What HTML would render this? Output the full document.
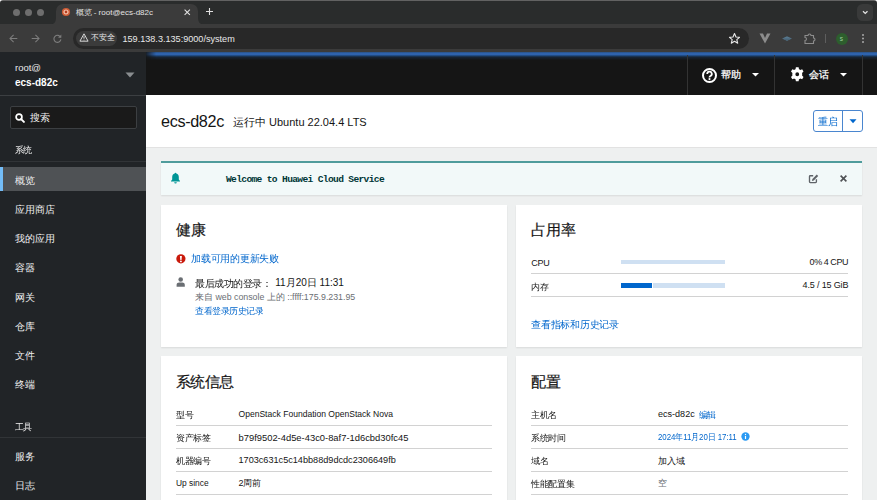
<!DOCTYPE html>
<html><head><meta charset="utf-8">
<style>
*{box-sizing:border-box;margin:0;padding:0}
html,body{width:877px;height:500px;overflow:hidden;background:#eef0f0;font-family:"Liberation Sans",sans-serif;}
.abs{position:absolute}
/* browser chrome */
#tabstrip{position:absolute;left:0;top:0;width:877px;height:25px;background:#2a2c2c;border-top:1px solid #626262}
#toolbar{position:absolute;left:0;top:24px;width:877px;height:28px;background:#3b3b3b}
.dot{position:absolute;width:7.5px;height:7.5px;border-radius:50%;background:#6e6e6e;top:8.5px}
#tab{position:absolute;left:56px;top:4px;width:142px;height:21px;background:#3b3b3b;border-radius:7px 7px 0 0}
#omni{position:absolute;left:73px;top:28px;width:676px;height:21px;background:#282828;border-radius:11px}
#chip{position:absolute;left:76px;top:31px;width:41px;height:14.5px;background:#3b3b3b;border-radius:8px}
.wt{color:#e3e3e3;font-size:9px;white-space:nowrap}
/* cockpit */
#sidebar{position:absolute;left:0;top:52px;width:146px;height:448px;background:#212427}
#masthead{position:absolute;left:146px;top:52px;width:731px;height:43px;background:#151515}
#blueline{position:absolute;left:146px;top:52px;width:731px;height:8px;background:linear-gradient(#2a4f7c 0,#2f63ad 1.2px,#2f63ad 2.5px,#1f4a80 3.6px,#172638 5px,#151515 8px);-webkit-mask-image:linear-gradient(90deg,rgba(0,0,0,0.15) 0,#000 10px)}
.sep{position:absolute;top:55px;width:1px;height:40px;background:#333}
#hdr{position:absolute;left:146px;top:95px;width:731px;height:53px;background:#fff;border-bottom:1px solid #e2e2e2}
.card{position:absolute;background:#fff;box-shadow:0 1px 1.5px rgba(3,3,3,0.09)}
.nav{position:absolute;left:15px;color:#f0f0f0;font-size:9.6px;white-space:nowrap}
.h2{position:absolute;font-size:14.5px;color:#151515;white-space:nowrap;-webkit-text-stroke:0.2px #151515}
.lbl{position:absolute;font-size:9.5px;color:#151515;white-space:nowrap}
.link{color:#0066cc}
.hr{position:absolute;height:1px;background:#d2d2d2}
</style></head><body>

<!-- tab strip -->
<div id="tabstrip"></div>
<div class="dot" style="left:12.5px"></div>
<div class="dot" style="left:24.5px"></div>
<div class="dot" style="left:36.5px"></div>
<svg class="abs" style="left:0;top:0" width="4" height="4" viewBox="0 0 4 4"><path d="M0 0H3Q0 0.3 0 3Z" fill="#f4f4f4"/></svg><svg class="abs" style="left:873px;top:0" width="4" height="4" viewBox="0 0 4 4"><path d="M4 0H1Q4 0.3 4 3Z" fill="#f4f4f4"/></svg><div id="tab"></div><svg class="abs" style="left:49px;top:18px" width="7" height="7" viewBox="0 0 7 7"><path d="M0 7Q7 7 7 0V7Z" fill="#3b3b3b"/></svg><svg class="abs" style="left:198px;top:18px" width="7" height="7" viewBox="0 0 7 7"><path d="M7 7Q0 7 0 0V7Z" fill="#3b3b3b"/></svg>
<div id="toolbar"></div>
<div id="omni"></div>
<div id="chip"></div>

<!-- tab contents -->
<svg class="abs" style="left:60.8px;top:7.2px" width="10" height="10" viewBox="0 0 10 10"><circle cx="5" cy="5" r="4.1" fill="#cf5c35"/><circle cx="5" cy="5" r="2" fill="none" stroke="#f2c2ad" stroke-width="1.2"/><circle cx="5" cy="5" r="0.9" fill="#a8321a"/></svg>
<div class="abs wt" style="left:75.5px;top:6.5px;font-size:8px;line-height:11px">概览 - root@ecs-d82c</div>
<svg class="abs" style="left:184px;top:9px" width="6.5" height="6.5" viewBox="0 0 6.5 6.5"><path d="M0.6 0.6L5.9 5.9M5.9 0.6L0.6 5.9" stroke="#e0e0e0" stroke-width="1.1"/></svg>
<svg class="abs" style="left:205.8px;top:8.4px" width="7" height="7" viewBox="0 0 7 7"><path d="M3.5 0V7M0 3.5H7" stroke="#e0e0e0" stroke-width="1.1"/></svg>
<svg class="abs" style="left:856.5px;top:4px" width="16.5" height="17" viewBox="0 0 16.5 17"><rect x="0" y="0" width="16.5" height="17" rx="5.5" fill="#393a3a"/><path d="M6 7.3L8.25 9.5L10.5 7.3" stroke="#e6e6e6" stroke-width="1.25" fill="none"/></svg>
<!-- toolbar icons -->
<svg class="abs" style="left:9px;top:34px" width="9" height="9" viewBox="0 0 9 9"><path d="M8.3 4.5H1M4.6 0.9L1 4.5L4.6 8.1" stroke="#7d7d7d" stroke-width="1.05" fill="none"/></svg>
<svg class="abs" style="left:31px;top:34px" width="9" height="9" viewBox="0 0 9 9"><path d="M0.7 4.5H8M4.4 0.9L8 4.5L4.4 8.1" stroke="#7d7d7d" stroke-width="1.05" fill="none"/></svg>
<svg class="abs" style="left:52.5px;top:34px" width="9" height="9" viewBox="0 0 9 9"><path d="M7.6 3.3A3.5 3.5 0 1 0 7.9 5.4" stroke="#7d7d7d" stroke-width="1.1" fill="none"/><path d="M8.3 0.6V3.8H5.1Z" fill="#7d7d7d"/></svg>
<svg class="abs" style="left:78.5px;top:33px" width="10" height="9" viewBox="0 0 12 11"><path d="M6 1L11 10H1Z" stroke="#e8e8e8" stroke-width="1.1" fill="none" stroke-linejoin="round"/><path d="M6 4V7M6 8.2V9" stroke="#e8e8e8" stroke-width="1.1"/></svg>
<div class="abs wt" style="left:90.5px;top:33px;font-size:7.6px;line-height:10px;color:#e8e8e8">不安全</div>
<div class="abs wt" style="left:122.5px;top:32.5px;font-size:9.1px;line-height:12px;color:#e8e8e8">159.138.3.135:9000/system</div>
<svg class="abs" style="left:728px;top:32px" width="13" height="13" viewBox="0 0 13 13"><path d="M6.5 1.5L8 5L11.5 5.3L8.8 7.6L9.7 11.2L6.5 9.3L3.3 11.2L4.2 7.6L1.5 5.3L5 5Z" stroke="#e8e8e8" stroke-width="1.1" fill="none" stroke-linejoin="round"/></svg>
<svg class="abs" style="left:759px;top:33px" width="12" height="11" viewBox="0 0 12 11"><path d="M0.5 0.5H4L6 5L8 0.5H11.5L6 10.5Z" fill="#8c8c8c"/></svg>
<svg class="abs" style="left:782px;top:35.5px" width="10" height="5" viewBox="0 0 10 5"><path d="M0.2 2.5L5 0.2L9.8 2.5L5 4.8Z" fill="#56778d"/><path d="M0.2 2.5L9.8 2.5L5 4.8Z" fill="#4a6578"/></svg>
<svg class="abs" style="left:803px;top:32px" width="13" height="13" viewBox="0 0 13 13"><path d="M2 3.5H5A1.5 1.5 0 0 1 8 3.5H10.5V6A1.5 1.5 0 0 1 10.5 9V11.5H2V8.5A1.5 1.5 0 0 0 2 5.5Z" stroke="#8c8c8c" stroke-width="1.1" fill="none"/></svg>
<div class="abs" style="left:825px;top:34px;width:1px;height:8.5px;background:#5e5e5e"></div>
<div class="abs" style="left:835.7px;top:32.7px;width:12px;height:12px;border-radius:50%;background:#2d5e2d"></div>
<div class="abs" style="left:839.8px;top:34px;font-size:6.5px;color:#9fcf9f;line-height:9px">s</div>
<svg class="abs" style="left:860px;top:32px" width="6" height="13" viewBox="0 0 6 13"><circle cx="3" cy="3" r="1" fill="#a8a8a8"/><circle cx="3" cy="6.5" r="1" fill="#a8a8a8"/><circle cx="3" cy="10" r="1" fill="#a8a8a8"/></svg>

<!-- sidebar -->
<div id="sidebar"></div>

<!-- sidebar contents -->
<div class="abs" style="left:15px;top:61.4px;font-size:9.5px;color:#e8e8e8;line-height:13px">root@</div>
<div class="abs" style="left:15px;top:75.5px;font-size:10px;color:#fff;font-weight:bold;line-height:14px">ecs-d82c</div>
<svg class="abs" style="left:125px;top:72px" width="10" height="6" viewBox="0 0 10 6"><path d="M0.5 0.5H9.5L5 5.5Z" fill="#8a8d90"/></svg>
<div class="abs" style="left:0;top:95px;width:146px;height:1px;background:#3c3f42"></div>
<div class="abs" style="left:10px;top:106px;width:127px;height:23px;background:#1a1a1a;border:1px solid #3c3f42;border-radius:2px"></div>
<svg class="abs" style="left:14.5px;top:112.5px" width="10" height="10" viewBox="0 0 10 10"><circle cx="4" cy="4" r="2.9" stroke="#fff" stroke-width="1.7" fill="none"/><path d="M6.1 6.1L8.9 8.9" stroke="#fff" stroke-width="2" stroke-linecap="round"/></svg>
<div class="abs" style="left:30px;top:111px;font-size:10px;color:#f0f0f0;line-height:14px">搜索</div>
<div class="abs nav" style="top:143.8px;font-size:17px;letter-spacing:-0.2px;line-height:26px;transform:scale(.5);transform-origin:0 0">系统</div>
<div class="abs" style="left:0;top:161px;width:146px;height:1px;background:#313437"></div>
<div class="abs" style="left:0;top:167px;width:146px;height:24px;background:#4f5255"></div>
<div class="abs" style="left:0;top:167px;width:3px;height:24px;background:#73bcf7"></div>
<div class="nav" style="top:173.8px;line-height:14px">概览</div>
<div class="nav" style="top:202.8px;line-height:14px">应用商店</div>
<div class="nav" style="top:231.8px;line-height:14px">我的应用</div>
<div class="nav" style="top:260.8px;line-height:14px">容器</div>
<div class="nav" style="top:290.8px;line-height:14px">网关</div>
<div class="nav" style="top:319.8px;line-height:14px">仓库</div>
<div class="nav" style="top:348.8px;line-height:14px">文件</div>
<div class="nav" style="top:377.8px;line-height:14px">终端</div>
<div class="nav" style="top:420.8px;font-size:17px;letter-spacing:-0.2px;line-height:26px;transform:scale(.5);transform-origin:0 0">工具</div>
<div class="abs" style="left:0;top:437px;width:146px;height:1px;background:#313437"></div>
<div class="nav" style="top:449.8px;line-height:14px">服务</div>
<div class="nav" style="top:478.8px;line-height:14px">日志</div>
<div id="masthead"></div>
<div id="blueline"></div>
<div class="sep" style="left:687px"></div>
<div class="sep" style="left:774px"></div>
<div class="sep" style="left:862px"></div>


<svg class="abs" style="left:701.5px;top:67.5px" width="15" height="15" viewBox="0 0 15 15"><circle cx="7.5" cy="7.5" r="6.5" stroke="#fff" stroke-width="2" fill="none"/><path d="M5.2 5.9A2.3 2.3 0 1 1 8.4 8C7.8 8.3 7.5 8.6 7.5 9.4" stroke="#fff" stroke-width="1.8" fill="none"/><circle cx="7.5" cy="11.1" r="1.05" fill="#fff"/></svg>
<div class="abs" style="left:721px;top:67.5px;font-size:10px;color:#fff;line-height:14px;-webkit-text-stroke:0.25px #fff">帮助</div>
<svg class="abs" style="left:751.5px;top:73px" width="7" height="4" viewBox="0 0 7 4"><path d="M0 0H7L3.5 3.6Z" fill="#fff"/></svg>
<svg class="abs" style="left:789.5px;top:67px" width="14.5" height="14.5" viewBox="0 0 16 16"><path fill="#fff" fill-rule="evenodd" d="M6.5 0.3H9.5L9.9 2.4A5.9 5.9 0 0 1 11.4 3.3L13.4 2.5L14.9 5.1L13.3 6.5A5.9 5.9 0 0 1 13.3 9.5L14.9 10.9L13.4 13.5L11.4 12.7A5.9 5.9 0 0 1 9.9 13.6L9.5 15.7H6.5L6.1 13.6A5.9 5.9 0 0 1 4.6 12.7L2.6 13.5L1.1 10.9L2.7 9.5A5.9 5.9 0 0 1 2.7 6.5L1.1 5.1L2.6 2.5L4.6 3.3A5.9 5.9 0 0 1 6.1 2.4Z M8 5.9A2.1 2.1 0 1 0 8 10.1A2.1 2.1 0 1 0 8 5.9Z"/></svg>
<div class="abs" style="left:809px;top:67.5px;font-size:10px;color:#fff;line-height:14px;-webkit-text-stroke:0.25px #fff">会话</div>
<svg class="abs" style="left:839.5px;top:73px" width="7" height="4" viewBox="0 0 7 4"><path d="M0 0H7L3.5 3.6Z" fill="#fff"/></svg>
<div id="hdr"></div>


<div class="abs" style="left:161px;top:110px;font-size:16.2px;letter-spacing:-0.35px;color:#151515;line-height:22px">ecs-d82c</div>
<div class="abs" style="left:233px;top:114px;font-size:11px;color:#151515;line-height:16px">运行中 Ubuntu 22.04.4 LTS</div>
<div class="abs" style="left:813px;top:110px;width:50px;height:22px;border:1px solid #4a86cf;border-radius:3px;background:#fff"></div>
<div class="abs" style="left:842px;top:110px;width:1px;height:22px;background:#4a86cf"></div>
<div class="abs" style="left:818.3px;top:114.6px;font-size:19px;letter-spacing:0.2px;color:#0066cc;line-height:28px;transform:scale(.5);transform-origin:0 0;white-space:nowrap">重启</div>
<svg class="abs" style="left:849px;top:119px" width="8" height="5" viewBox="0 0 8 5"><path d="M0.5 0.3H7.5L4 4.2Z" fill="#0066cc"/></svg>
<!-- alert -->
<div class="card" style="left:161px;top:161px;width:701px;height:34.2px;background:#f2f9f9;border-top:2px solid #4f9c9c"></div>

<div class="card" style="left:161px;top:205px;width:346px;height:141.5px"></div>
<div class="card" style="left:516px;top:205px;width:346px;height:141.5px"></div>
<div class="card" style="left:161px;top:356px;width:346px;height:150px"></div>
<div class="card" style="left:516px;top:356px;width:346px;height:150px"></div>


<!-- alert content -->
<svg class="abs" style="left:170px;top:172px" width="11" height="12" viewBox="0 0 11 12"><path d="M5.5 0.8C5 0.8 4.7 1.1 4.7 1.5C3 1.9 2.2 3.3 2.2 5V7.6L1 8.9V9.6H10V8.9L8.8 7.6V5C8.8 3.3 8 1.9 6.3 1.5C6.3 1.1 6 0.8 5.5 0.8Z M4.2 10.2A1.3 1.3 0 0 0 6.8 10.2Z" fill="#009596"/></svg>
<div class="abs" style="left:226px;top:174px;font-family:'Liberation Mono',monospace;font-weight:bold;font-size:9.6px;letter-spacing:-0.66px;color:#003737;line-height:12px;white-space:nowrap">Welcome to Huawei Cloud Service</div>
<svg class="abs" style="left:808px;top:173px" width="11" height="11" viewBox="0 0 11 11"><path d="M5.2 2.7H2.3Q1.5 2.7 1.5 3.5V8.8Q1.5 9.6 2.3 9.6H7.6Q8.4 9.6 8.4 8.8V6.2" stroke="#5f6368" stroke-width="1.35" fill="none"/><path d="M3.9 7.9L4.4 6L8.8 1.6L10.2 3L5.8 7.4Z" fill="#5f6368"/></svg>
<svg class="abs" style="left:839.5px;top:175px" width="7" height="7" viewBox="0 0 7 7"><path d="M0.6 0.6L6.4 6.4M6.4 0.6L0.6 6.4" stroke="#4f5255" stroke-width="1.6"/></svg>

<!-- health -->
<div class="h2" style="left:176px;top:221px;line-height:18px">健康</div>
<svg class="abs" style="left:175.5px;top:253.5px" width="10" height="10" viewBox="0 0 10 10"><circle cx="4.9" cy="4.8" r="4.6" fill="#c9190b"/><path d="M3.9 2.1H5.9L5.5 5.9H4.3Z" fill="#fff"/><circle cx="4.9" cy="7.4" r="0.95" fill="#fff"/></svg>
<div class="lbl link" style="left:190.5px;top:251.5px;font-size:19px;letter-spacing:0.5px;line-height:28px;transform:scale(.5);transform-origin:0 0">加载可用的更新失败</div>
<svg class="abs" style="left:175.5px;top:277px" width="10" height="10" viewBox="0 0 10 10"><circle cx="4.7" cy="2.5" r="2.3" fill="#6a6e73"/><path d="M0.6 9.7V8C0.6 6.4 1.9 5.6 3.1 5.6H6.3C7.5 5.6 8.8 6.4 8.8 8V9.7Z" fill="#6a6e73"/></svg>
<div class="lbl" style="left:195px;top:275.5px;font-size:19.4px;line-height:28px;transform:scale(.5);transform-origin:0 0">最后成功的登录：</div><div class="lbl" style="left:275.3px;top:275.5px;font-size:10px;line-height:14px">11月20日 11:31</div>
<div class="lbl" style="left:195px;top:291px;font-size:8.8px;line-height:13px;color:#6a6e73">来自 web console 上的 ::ffff:175.9.231.95</div>
<div class="lbl link" style="left:195px;top:305px;font-size:17px;letter-spacing:0px;line-height:26px;transform:scale(.5);transform-origin:0 0">查看登录历史记录</div>

<!-- usage -->
<div class="h2" style="left:531px;top:221px;line-height:18px">占用率</div>
<div class="lbl" style="left:531.2px;top:256.5px;line-height:13px;font-size:9px;letter-spacing:-0.25px">CPU</div>
<div class="abs" style="left:621px;top:259.6px;width:104px;height:4.9px;background:#cfe0f2"></div>
<div class="lbl" style="left:700px;top:256px;width:148px;text-align:right;line-height:13px;font-size:9px;letter-spacing:-0.45px">0% 4 CPU</div>
<div class="hr" style="left:531px;top:273px;width:317px"></div>
<div class="lbl" style="left:531px;top:279.5px;line-height:26px;font-size:18px;letter-spacing:-0.8px;transform:scale(.5);transform-origin:0 0">内存</div>
<div class="abs" style="left:652.5px;top:282.9px;width:72.5px;height:4.9px;background:#cfe0f2"></div>
<div class="abs" style="left:621px;top:282.9px;width:30.5px;height:4.9px;background:#0066cc"></div>
<div class="lbl" style="left:700px;top:279px;width:148.3px;text-align:right;line-height:13px;font-size:9px;letter-spacing:-0.15px">4.5 / 15 GiB</div>
<div class="hr" style="left:531px;top:296px;width:317px"></div>
<div class="lbl link" style="left:531px;top:318px;font-size:19px;letter-spacing:0.55px;line-height:26px;transform:scale(.5);transform-origin:0 0">查看指标和历史记录</div>

<!-- system info -->
<div class="h2" style="left:176px;top:373px;line-height:18px;font-size:15px;letter-spacing:-0.55px">系统信息</div>
<div class="lbl" style="left:176px;top:408.8px;line-height:26px;font-size:17px;letter-spacing:0.4px;transform:scale(.5);transform-origin:0 0">型号</div>
<div class="lbl" style="left:238.5px;top:408px;line-height:13px;font-size:8.55px">OpenStack Foundation OpenStack Nova</div>
<div class="hr" style="left:176px;top:425px;width:316px"></div>
<div class="lbl" style="left:176px;top:431.8px;line-height:26px;font-size:17px;letter-spacing:0.4px;transform:scale(.5);transform-origin:0 0">资产标签</div>
<div class="lbl" style="left:238.5px;top:431px;line-height:13px;font-size:9.4px">b79f9502-4d5e-43c0-8af7-1d6cbd30fc45</div>
<div class="hr" style="left:176px;top:448px;width:316px"></div>
<div class="lbl" style="left:176px;top:454.8px;line-height:26px;font-size:17px;letter-spacing:0.4px;transform:scale(.5);transform-origin:0 0">机器编号</div>
<div class="lbl" style="left:238.5px;top:454px;line-height:13px;font-size:9.15px">1703c631c5c14bb88d9dcdc2306649fb</div>
<div class="hr" style="left:176px;top:471px;width:316px"></div>
<div class="lbl" style="left:176px;top:477px;line-height:13px;font-size:8.4px">Up since</div>
<div class="lbl" style="left:238.5px;top:477px;line-height:13px;font-size:9px;letter-spacing:-0.3px">2周前</div>
<div class="hr" style="left:176px;top:494px;width:316px"></div>

<!-- config -->
<div class="h2" style="left:531px;top:373px;line-height:18px">配置</div>
<div class="lbl" style="left:531px;top:408.8px;line-height:26px;font-size:17px;letter-spacing:0.4px;transform:scale(.5);transform-origin:0 0">主机名</div>
<div class="lbl" style="left:658px;top:408px;line-height:13px;font-size:9.05px">ecs-d82c</div><div class="lbl link" style="left:699px;top:409.2px;line-height:26px;font-size:17px;letter-spacing:-0.8px;transform:scale(.5);transform-origin:0 0">编辑</div>
<div class="hr" style="left:531px;top:425px;width:317px"></div>
<div class="lbl" style="left:531px;top:431.8px;line-height:26px;font-size:17px;letter-spacing:0.4px;transform:scale(.5);transform-origin:0 0">系统时间</div>
<div class="lbl link" style="left:658px;top:431px;line-height:13px;font-size:9px;letter-spacing:-0.05px"><span id="dt" style="display:inline-block;transform-origin:0 0;transform:scaleX(0.875)">2024年11月20日 17:11</span></div>
<svg class="abs" style="left:741px;top:432.2px" width="9" height="9" id="infoic" viewBox="0 0 10 10"><circle cx="5" cy="5" r="4.6" fill="#2b9af3"/><path d="M5 4.3V7.8" stroke="#fff" stroke-width="1.3"/><circle cx="5" cy="2.7" r="0.75" fill="#fff"/></svg>
<div class="hr" style="left:531px;top:448px;width:317px"></div>
<div class="lbl" style="left:531px;top:454.8px;line-height:26px;font-size:17px;letter-spacing:0.4px;transform:scale(.5);transform-origin:0 0">域名</div>
<div class="lbl" style="left:658px;top:454.5px;line-height:13px;font-size:9px;letter-spacing:-0.15px">加入域</div>
<div class="hr" style="left:531px;top:471px;width:317px"></div>
<div class="lbl" style="left:531px;top:477.8px;line-height:26px;font-size:17px;letter-spacing:0.4px;transform:scale(.5);transform-origin:0 0">性能配置集</div>
<div class="lbl" style="left:658px;top:477px;line-height:13px;color:#6a6e73;font-size:9px">空</div>
<div class="hr" style="left:531px;top:494px;width:317px"></div>
</body></html>
